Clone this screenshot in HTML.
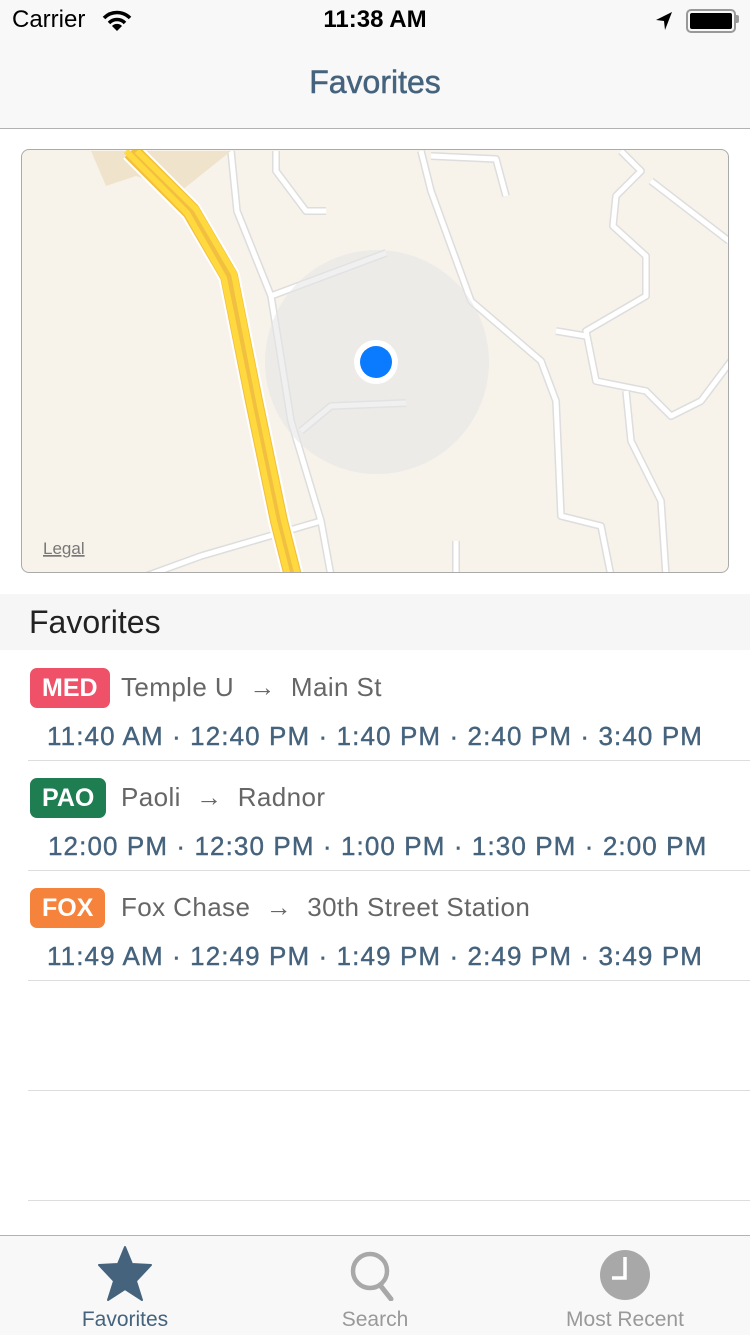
<!DOCTYPE html>
<html><head><meta charset="utf-8"><style>
body{margin:0;width:750px;height:1334px;background:#fff;font-family:"Liberation Sans",sans-serif;position:relative;overflow:hidden}
.a{position:absolute}
.row{position:absolute;left:28px;right:0;height:110px;border-bottom:1px solid #ddd}
.badge{position:absolute;left:2px;top:18px;height:40px;border-radius:7px;color:#fff;font-weight:bold;font-size:25px;line-height:40px;padding:0 12px}
.route{position:absolute;left:93px;top:17px;line-height:40px;font-size:26px;color:#666;letter-spacing:.4px}
.times{position:absolute;left:19px;top:68px;font-size:26px;color:#45637d;line-height:36px;letter-spacing:1.1px;-webkit-text-stroke:.4px #45637d}
</style></head><body>
<div class="a" style="left:0;top:0;width:750px;height:128px;background:#f8f8f8;border-bottom:1px solid #b2b2b2"></div>
<div class="a" style="left:12px;top:6px;font-size:24px;color:#000">Carrier</div>
<svg class="a" style="left:102px;top:10px" width="30" height="22" viewBox="0 0 30 22"><path d="M2 8 A18 18 0 0 1 28 8" stroke="#000" stroke-width="3.5" fill="none"/><path d="M7 13 A11 11 0 0 1 23 13" stroke="#000" stroke-width="3.5" fill="none"/><path d="M15 21 L10 16 A7 7 0 0 1 20 16Z" fill="#000"/></svg>
<div class="a" style="left:0;width:750px;text-align:center;top:6px;font-size:24px;font-weight:bold;color:#000">11:38 AM</div>
<svg class="a" style="left:654px;top:11px" width="20" height="20" viewBox="0 0 20 20"><path d="M18 1 L2 9 L10 10 L11 19Z" fill="#000"/></svg>
<div class="a" style="left:686px;top:9px;width:46px;height:20px;border:2px solid #999;border-radius:5px"></div>
<div class="a" style="left:690px;top:13px;width:42px;height:16px;background:#000;border-radius:2px"></div>
<div class="a" style="left:736px;top:15px;width:3px;height:8px;background:#999;border-radius:0 2px 2px 0"></div>
<div class="a" style="left:0;width:750px;text-align:center;top:64px;font-size:32px;color:#45637d;-webkit-text-stroke:.5px #45637d">Favorites</div>

<div class="a" style="left:21px;top:149px;width:706px;height:422px;border:1px solid #aaa;border-radius:8px;overflow:hidden;background:#f7f3eb">
<svg width="706" height="422" viewBox="21 149 706 422" style="display:block">
<g fill="none" stroke-linejoin="round">
<g stroke="#ddd" stroke-width="8">
<path d="M230 150 L236 210 L270 295 L290 420 L320 520 L330 575"/>
<path d="M270 295 L385 252"/><path d="M300 430 L330 405 L405 402"/>
<path d="M145 575 L200 555 L320 520"/>
<path d="M420 150 L430 190 L470 300 L540 360 L555 400 L560 515 L600 525 L610 575"/>
<path d="M430 155 L495 158 L505 195"/><path d="M275 150 L275 170 L305 210 L325 210"/>
<path d="M620 150 L640 170 L615 195 L612 225 L645 255 L645 295 L585 330 L595 380 L645 390 L670 415 L700 400 L730 360"/>
<path d="M650 180 L728 240"/><path d="M555 330 L585 335"/>
<path d="M625 390 L630 440 L660 500 L665 575"/><path d="M455 540 L455 575"/>
</g>
<g stroke="#fff" stroke-width="5">
<path d="M230 150 L236 210 L270 295 L290 420 L320 520 L330 575"/>
<path d="M270 295 L385 252"/><path d="M300 430 L330 405 L405 402"/>
<path d="M145 575 L200 555 L320 520"/>
<path d="M420 150 L430 190 L470 300 L540 360 L555 400 L560 515 L600 525 L610 575"/>
<path d="M430 155 L495 158 L505 195"/><path d="M275 150 L275 170 L305 210 L325 210"/>
<path d="M620 150 L640 170 L615 195 L612 225 L645 255 L645 295 L585 330 L595 380 L645 390 L670 415 L700 400 L730 360"/>
<path d="M650 180 L728 240"/><path d="M555 330 L585 335"/>
<path d="M625 390 L630 440 L660 500 L665 575"/><path d="M455 540 L455 575"/>
</g></g>
<path d="M90 150 L105 185 L135 175 L180 190 L230 150Z" fill="#f0e3cc"/>
<g fill="none" stroke="#fff" stroke-width="22" stroke-linejoin="round"><path d="M130 150 L190 210 L228 275 L253 400 L278 520 L292 575"/></g>
<g fill="none" stroke="#f2c040" stroke-width="18" stroke-linejoin="round"><path d="M130 150 L190 210 L228 275 L253 400 L278 520 L292 575"/></g>
<g fill="none" stroke="#ffd93d" stroke-width="6" stroke-linejoin="round"><path d="M125 150 L186 212 L223 277 L248 400 L273 520 L287 575"/><path d="M136 150 L195 208 L233 273 L258 400 L283 520 L297 575"/></g>
<circle cx="376" cy="361" r="112" fill="#e6e6e6" opacity=".6"/>
<circle cx="375" cy="361" r="22" fill="#fff"/><circle cx="375" cy="361" r="16" fill="#0a7aff"/>
<text x="42" y="553" font-size="17" fill="#777" text-decoration="underline" font-family="Liberation Sans">Legal</text>
</svg></div>

<div class="a" style="left:0;top:594px;width:750px;height:56px;background:#f6f6f6"></div>
<div class="a" style="left:29px;top:604px;font-size:32px;color:#222">Favorites</div>

<div class="row" style="top:650px"><div class="badge" style="background:#ee5168">MED</div><div class="route">Temple U &nbsp;→&nbsp; Main St</div><div class="times">11:40 AM · 12:40 PM · 1:40 PM · 2:40 PM · 3:40 PM</div></div>
<div class="row" style="top:760px"><div class="badge" style="background:#1f7d52">PAO</div><div class="route">Paoli &nbsp;→&nbsp; Radnor</div><div class="times" style="left:20px">12:00 PM · 12:30 PM · 1:00 PM · 1:30 PM · 2:00 PM</div></div>
<div class="row" style="top:870px"><div class="badge" style="background:#f5833c">FOX</div><div class="route">Fox Chase &nbsp;→&nbsp; 30th Street Station</div><div class="times">11:49 AM · 12:49 PM · 1:49 PM · 2:49 PM · 3:49 PM</div></div>
<div class="row" style="top:980px"></div>
<div class="row" style="top:1090px"></div>

<div class="a" style="left:0;top:1235px;width:750px;height:99px;background:#f8f8f8;border-top:1px solid #b2b2b2"></div>
<svg class="a" style="left:96px;top:1245px" width="58" height="56" viewBox="0 0 58 56"><path d="M29 2 L36 19 L55 20 L40 36 L46 55 L29 44 L12 55 L18 36 L3 20 L22 19Z" fill="#45637d" stroke="#45637d" stroke-width="2" stroke-linejoin="round"/></svg>
<svg class="a" style="left:346px;top:1249px" width="54" height="52" viewBox="0 0 54 52"><circle cx="24" cy="22" r="17" stroke="#a8a8a8" stroke-width="4.5" fill="none"/><path d="M34 36 L45 50" stroke="#a8a8a8" stroke-width="5" stroke-linecap="round"/></svg>
<svg class="a" style="left:598px;top:1248px" width="54" height="54" viewBox="0 0 54 54"><circle cx="27" cy="27" r="25" fill="#a8a8a8"/><path d="M27 9 V30 H14" stroke="#fff" stroke-width="3.5" fill="none"/></svg>
<div class="a" style="left:0;width:250px;text-align:center;top:1308px;font-size:21px;color:#45637d">Favorites</div>
<div class="a" style="left:250px;width:250px;text-align:center;top:1308px;font-size:21px;color:#999">Search</div>
<div class="a" style="left:500px;width:250px;text-align:center;top:1308px;font-size:21px;color:#999">Most Recent</div>
</body></html>
